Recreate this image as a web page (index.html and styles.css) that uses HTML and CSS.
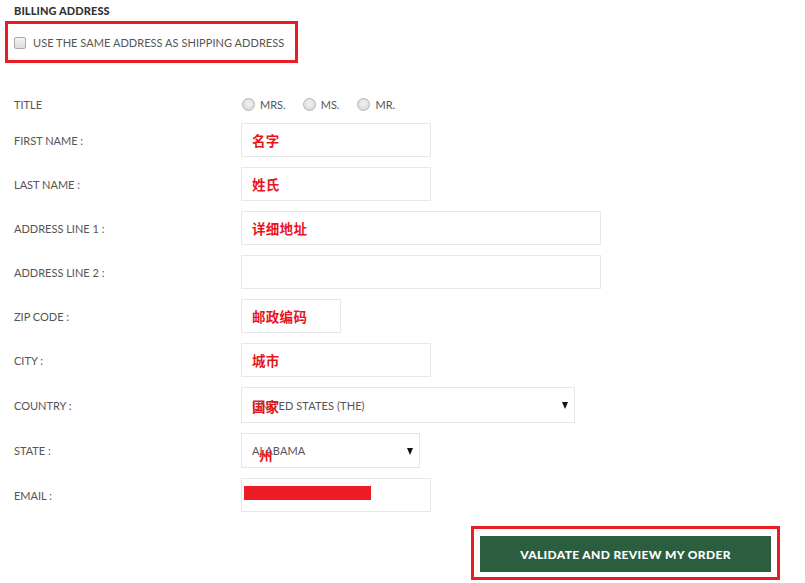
FILE: index.html
```html
<!DOCTYPE html>
<html>
<head>
<meta charset="utf-8">
<link rel="stylesheet" href="styles.css">
</head>
<body>
<div class="page">
  <h2 class="heading">BILLING ADDRESS</h2>
  <div class="same-box">
    <label class="check-label"><span class="checkbox"></span>USE THE SAME ADDRESS AS SHIPPING ADDRESS</label>
  </div>

  <div class="row title-row">
    <div class="label">TITLE</div>
    <div class="radios">
      <label class="radio-opt"><span class="radio"></span>MRS.</label>
      <label class="radio-opt"><span class="radio"></span>MS.</label>
      <label class="radio-opt"><span class="radio"></span>MR.</label>
    </div>
  </div>

  <div class="row">
    <div class="label">FIRST NAME :</div>
    <div class="field w190"><span class="note">名字</span></div>
  </div>
  <div class="row">
    <div class="label">LAST NAME :</div>
    <div class="field w190"><span class="note">姓氏</span></div>
  </div>
  <div class="row">
    <div class="label">ADDRESS LINE 1 :</div>
    <div class="field w360"><span class="note">详细地址</span></div>
  </div>
  <div class="row">
    <div class="label">ADDRESS LINE 2 :</div>
    <div class="field w360"></div>
  </div>
  <div class="row">
    <div class="label">ZIP CODE :</div>
    <div class="field w100"><span class="note">邮政编码</span></div>
  </div>
  <div class="row">
    <div class="label">CITY :</div>
    <div class="field w190"><span class="note">城市</span></div>
  </div>
  <div class="row">
    <div class="label">COUNTRY :</div>
    <div class="field select w334">
      <span class="sel-text">UNITED STATES (THE)</span>
      <span class="arrow"></span>
      <span class="overlay country-note">国家</span>
    </div>
  </div>
  <div class="row">
    <div class="label">STATE :</div>
    <div class="field select w179">
      <span class="sel-text">ALABAMA</span>
      <span class="arrow"></span>
      <span class="overlay state-note">州</span>
    </div>
  </div>
  <div class="row">
    <div class="label">EMAIL :</div>
    <div class="field w190"><span class="redact"></span></div>
  </div>

  <div class="submit-wrap">
    <div class="submit-box">
      <button class="submit">VALIDATE AND REVIEW MY ORDER</button>
    </div>
  </div>
</div>
</body>
</html>
```
FILE: styles.css
```css
* { box-sizing: border-box; }
html, body { margin: 0; padding: 0; background: #fff; }
body {
  font-family: Lato, "Open Sans", "Liberation Sans", "Noto Sans CJK SC", sans-serif;
  color: #555;
  font-size: 11px;
}
.page { padding: 4px 0 0 14px; width: 805px; height: 583px; overflow: hidden; }
.heading {
  margin: 0;
  font-size: 11px;
  line-height: 13px;
  font-weight: 900;
  color: #333;
  letter-spacing: 0.1px;
}
.same-box {
  margin: 4px 0 0 -9px;
  width: 293px;
  height: 42px;
  border: 3px solid #ea1d25;
  display: flex;
  align-items: center;
  padding-left: 6px;
}
.check-label { display: flex; align-items: center; gap: 7px; color: #555; letter-spacing: 0.05px; padding-top: 1px; }
.checkbox {
  width: 12px; height: 12px;
  border: 1px solid #a9a9a9;
  border-radius: 2px;
  background: linear-gradient(#f4f4f4, #dcdcdc);
}
.row { display: flex; align-items: center; margin-top: 10px; }
.label { width: 227px; flex: none; letter-spacing: 0; }
.title-row { margin-top: 31px; height: 20px; margin-bottom: -1px; }
.radios { display: flex; align-items: center; padding-left: 1px; }
.radio-opt { display: flex; align-items: center; gap: 5px; margin-right: 17px; }
.radio-opt:nth-child(2) { margin-right: 18px; }
.radio {
  width: 13px; height: 13px;
  border-radius: 50%;
  border: 1px solid #b4b4b4;
  background: radial-gradient(circle at 50% 40%, #f2f2f2, #d4d4d4);
}
.field {
  height: 34px;
  border: 1px solid #e6e6e6;
  position: relative;
  display: flex;
  align-items: center;
  padding-left: 10px;
}
.w190 { width: 190px; }
.w360 { width: 360px; }
.w100 { width: 100px; }
.w334 { width: 334px; height: 36px; }
.w179 { width: 179px; height: 35px; }
.note {
  font-family: "Noto Sans CJK SC", sans-serif;
  font-weight: 700;
  font-size: 13.5px;
  color: #e8141c;
  letter-spacing: 0.3px;
}
.sel-text { color: #555; letter-spacing: 0.1px; }
.arrow {
  position: absolute;
  right: 6px; top: 14px;
  width: 0; height: 0;
  border-left: 3.5px solid transparent;
  border-right: 3.5px solid transparent;
  border-top: 7px solid #111;
}
.overlay {
  position: absolute;
  font-family: "Noto Sans CJK SC", sans-serif;
  font-weight: 700;
  font-size: 13.5px;
  color: #e8141c;
}
.country-note { left: 10px; top: 8px; }
.state-note { left: 17px; top: 11px; }
.redact {
  position: absolute;
  left: 2px; top: 7px;
  width: 127px; height: 14px;
  background: #ee1c25;
}
.submit-wrap { margin: 14px 0 0 457px; }
.submit-box {
  width: 309px; height: 54px;
  border: 3px solid #ea1d25;
  padding: 7px 0 0 6px;
}
.submit {
  width: 291px; height: 36px;
  background: #2a5e3f;
  border: none;
  color: #fff;
  font-family: Lato, "Open Sans", sans-serif;
  font-weight: 900;
  font-size: 12px;
  letter-spacing: 0.35px;
  padding: 0;
}
```
